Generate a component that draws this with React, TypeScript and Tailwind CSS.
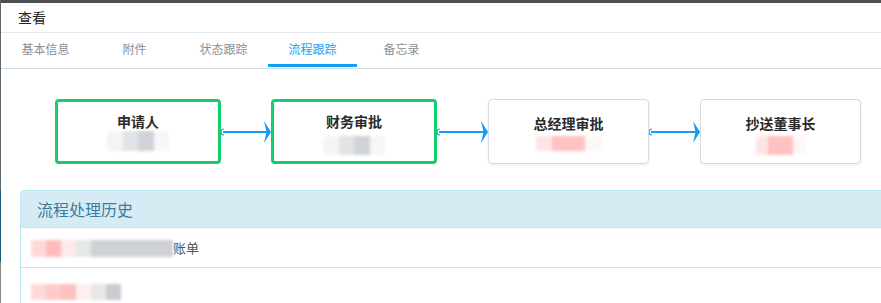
const tabs = ['基本信息', '附件', '状态跟踪', '流程跟踪', '备忘录']

const nodes = [
  { title: '申请人', done: true, w: 'w-[166px]', blur: 'grey', bw: 'w-[62px] h-[20px]', bt: 'mt-[1px]' },
  { title: '财务审批', done: true, w: 'w-[166px]', blur: 'grey', bw: 'w-[62px] h-[19px]', bt: 'mt-[6px]' },
  { title: '总经理审批', done: false, w: 'w-[161px]', blur: 'pink', bw: 'w-[66px] h-[15px]', bt: 'mt-[4px]' },
  { title: '抄送董事长', done: false, w: 'w-[161px]', blur: 'pink', bw: 'w-[50px] h-[19px]', bt: 'mt-[4px]' },
]

function Arrow({ wide }: { wide: boolean }) {
  return (
    <div className={wide ? 'w-[51px] h-full' : 'w-[50px] h-full'}>
      <svg width={wide ? 51 : 50} height="65" viewBox={wide ? '0 0 51 65' : '0 0 50 65'}>
        <path d="M3 30 A3 3 0 0 0 3 36" fill="none" stroke="#159cf5" strokeWidth="1.2" />
        <line x1="2" y1="33" x2={wide ? 47 : 46} y2="33" stroke="#159cf5" strokeWidth="2" />
        <path
          d={wide ? 'M44 22 L51 33 L44 44 L46.5 33 Z' : 'M43 22 L50 33 L43 44 L45.5 33 Z'}
          fill="#159cf5"
        />
      </svg>
    </div>
  )
}

function Blur({ kind, w }: { kind: string; w: string }) {
  return (
    <div className={`${w} flex blur-[1.5px] rounded-sm overflow-hidden`}>
      {kind === 'grey' ? (
        <>
          <div className="flex-1 bg-[#f3f4f6]" />
          <div className="flex-1 bg-[#e1e3e6]" />
          <div className="flex-1 bg-[#cfd3d8]" />
          <div className="flex-1 bg-[#f6f7f8]" />
        </>
      ) : (
        <>
          <div className="flex-1 bg-[#ffe4e4]" />
          <div className="flex-[2] bg-[#ffc1c1]" />
          <div className="flex-1 bg-[#fff6f6]" />
        </>
      )}
    </div>
  )
}

export default function App() {
  return (
    <div className="w-[881px] h-[303px] overflow-hidden flex bg-white font-['Noto_Sans_CJK_SC','Noto_Sans',sans-serif]">
      {/* backdrop edge on the left */}
      <div className="w-px flex flex-col shrink-0">
        <div className="h-[190px] bg-[#5d6a72]" />
        <div className="h-[72px] bg-[#235d7c]" />
        <div className="flex-1 bg-[#8a8a8a]" />
      </div>

      <div className="flex-1 flex flex-col min-w-0">
        <div className="h-[3px] bg-[#4e4f4f] shrink-0" />

        <div className="h-[30px] shrink-0 border-b border-[#e4e6e8] flex items-center pl-[17px] text-[14px] text-[#222]">
          查看
        </div>

        <div className="h-[36px] shrink-0 border-b border-[#d3dee6] flex">
          {tabs.map((t, i) => (
            <div key={t} className="w-[89px] flex flex-col">
              <div
                className={`flex-1 flex items-center justify-center text-[12px] ${
                  i === 3 ? 'text-[#1a9ff0]' : 'text-[#8a8f96]'
                }`}
              >
                {t}
              </div>
              <div className={`h-[3px] ${i === 3 ? 'bg-[#12a0f2]' : ''}`} />
              <div className="h-px" />
            </div>
          ))}
        </div>

        <div className="pt-[30px] pl-[54px] flex h-[95px] shrink-0">
          {nodes.map((n, i) => (
            <div key={n.title} className="flex h-[65px]">
              {i > 0 && <Arrow wide={i > 1} />}
              <div
                className={`${n.w} h-[65px] rounded-[4px] flex flex-col items-center ${
                  n.done
                    ? 'border-[3px] border-[#16cc6c] pt-[10px]'
                    : 'border border-[#d3dbe4] shadow-[0_1px_3px_rgba(0,0,0,0.08)] pt-[14px]'
                }`}
              >
                <div className="text-[14px] font-bold text-[#2a2a2a] leading-[18px]">{n.title}</div>
                <div className={n.bt}>
                  <Blur kind={n.blur} w={n.bw} />
                </div>
              </div>
            </div>
          ))}
        </div>

        <div className="mt-[26px] ml-[19px] w-[900px] border border-[#bce8f1] rounded-tl-[4px]">
          <div className="h-[37px] bg-[#d6ecf5] border-b border-[#bce8f1] flex items-center pl-[16px] text-[16px] text-[#3b7d9c]">
            流程处理历史
          </div>
          <div className="h-[40px] border-b border-[#dddddd] flex items-center pl-[10px] text-[13px] text-[#555]">
            <div className="w-[142px] h-[17px] flex blur-[1.5px] mt-[2px]">
              <div className="w-[15px] bg-[#ffd9d9]" />
              <div className="w-[15px] bg-[#ffbcbc]" />
              <div className="w-[15px] bg-[#ffe9e9]" />
              <div className="w-[15px] bg-[#e6e8e8]" />
              <div className="flex-1 bg-[#cfd2d5]" />
            </div>
            <span>账单</span>
          </div>
          <div className="h-[40px] flex items-center pl-[10px] text-[13px] text-[#444]">
            <div className="w-[90px] h-[16px] flex blur-[1.5px] mt-[8px]">
              <div className="w-[15px] bg-[#ffd9d9]" />
              <div className="w-[15px] bg-[#ffcaca]" />
              <div className="w-[15px] bg-[#ffc0c0]" />
              <div className="w-[15px] bg-[#fff0f0]" />
              <div className="w-[15px] bg-[#e8e8e8]" />
              <div className="flex-1 bg-[#c9ccd0]" />
            </div>
          </div>
        </div>
      </div>
    </div>
  )
}
